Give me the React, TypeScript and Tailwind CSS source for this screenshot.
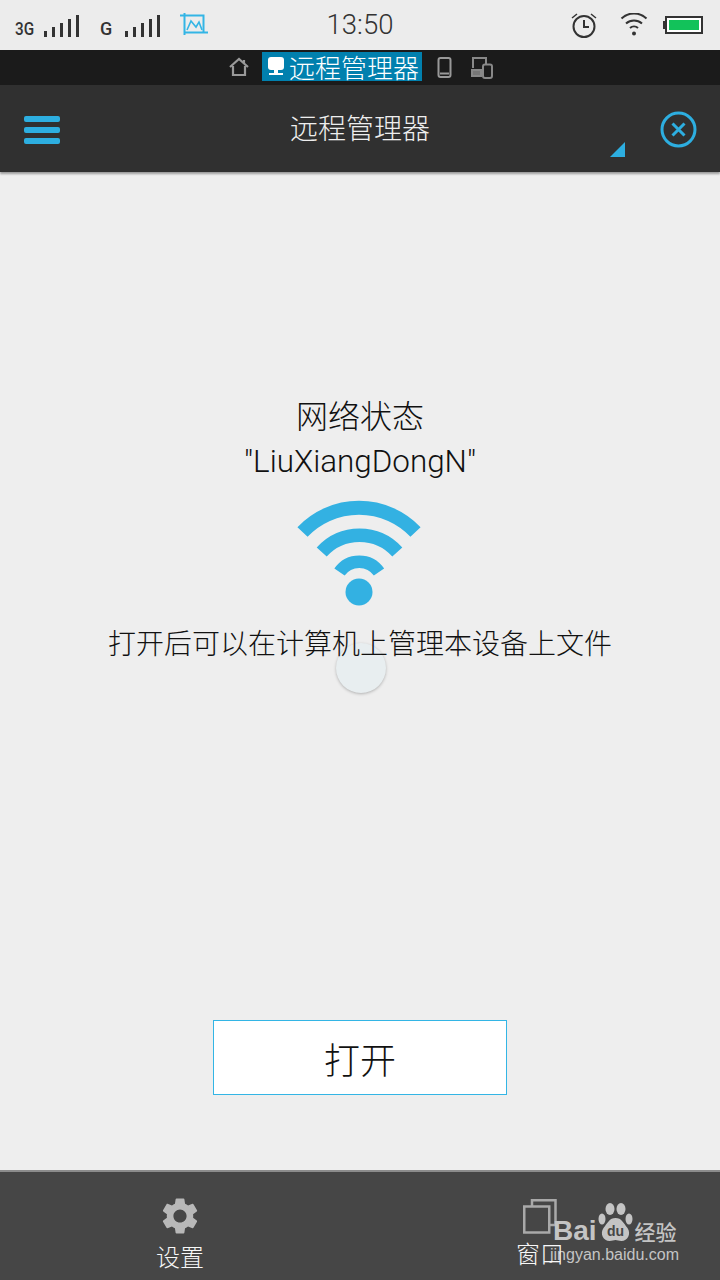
import { MdSettings } from "react-icons/md";

const cjk = "font-['Noto_Sans_CJK_SC','Noto_Sans',sans-serif]";
const roboto = "font-['Roboto','Noto_Sans_CJK_SC',sans-serif]";

function SignalBars() {
  return (
    <div className="flex items-end gap-[5px] mt-[1px]">
      {[6, 10, 14, 18, 22].map((h, i) => (
        <div key={i} className="w-[3px] bg-[#333]" style={{ height: h }} />
      ))}
    </div>
  );
}

function CropIcon() {
  return (
    <svg width="28" height="23" viewBox="0 0 28 23" fill="none" stroke="#33b5e5" strokeWidth="2">
      <path d="M0 2.500h23.500V20M4.500 0v22M4.500 19.500H28" />
      <path d="M7 17l4-9 5 6 3-5 3 8" strokeWidth="1.600" />
    </svg>
  );
}

function AlarmIcon() {
  return (
    <svg width="28" height="28" viewBox="0 0 28 28" fill="none" stroke="#333">
      <circle cx="14" cy="15.500" r="10.500" strokeWidth="2" />
      <path d="M14 9v7h5" strokeWidth="2" />
      <path d="M2 7l5-4M26 7l-5-4" strokeWidth="1.500" />
    </svg>
  );
}

function SmallWifi() {
  return (
    <svg width="28" height="24" viewBox="0 0 28 24" fill="none" stroke="#333" strokeWidth="2">
      <path d="M1.500 5.500a18 18 0 0 1 25 0" />
      <path d="M6 10.500a12 12 0 0 1 16 0" />
      <path d="M10 15a6 6 0 0 1 8 0" />
      <circle cx="14" cy="20.500" r="2" fill="#333" stroke="none" />
    </svg>
  );
}

function Battery() {
  return (
    <div className="flex items-center">
      <div className="w-[2px] h-[8px] bg-[#333]" />
      <div className="w-[38px] h-[18px] border-2 border-[#333] p-[2px] bg-white">
        <div className="w-full h-full bg-[#12c25a]" />
      </div>
    </div>
  );
}

function StatusBar() {
  return (
    <div className="h-[50px] bg-[#ececec] grid grid-cols-[1fr_auto_1fr] items-center shrink-0">
      <div className="flex items-center">
        <span className={`${roboto} ml-[15px] mt-[8px] text-[18px] leading-none text-[#333] w-[29px] font-medium scale-x-[0.85] origin-left`}>3G</span>
        <SignalBars />
        <span className={`${roboto} ml-[21px] mt-[8px] text-[18px] leading-none text-[#333] w-[25px] font-medium`}>G</span>
        <SignalBars />
        <div className="ml-[20px] mt-[-1px]">
          <CropIcon />
        </div>
      </div>
      <span className={`${roboto} text-[27.500px] leading-none font-light text-[#333]`}>13:50</span>
      <div className="flex items-center justify-end mr-[17px]">
        <AlarmIcon />
        <div className="ml-[22px]">
          <SmallWifi />
        </div>
        <div className="ml-[15px]">
          <Battery />
        </div>
      </div>
    </div>
  );
}

function TabStrip() {
  return (
    <div className="h-[35px] bg-[#1b1b1b] flex items-start justify-center pl-[2px] shrink-0">
      <svg className="mt-[7px]" width="20" height="20" viewBox="0 0 20 20" fill="none" stroke="#999" strokeWidth="2.200">
        <path d="M1 10l9-8 9 8M4 9v9h12V9M15 3v4" />
      </svg>
      <div className="ml-[13px] mt-[2px] w-[160px] h-[29px] bg-[#0180ae] flex items-center pl-[6px]">
        <svg width="16" height="21" viewBox="0 0 16 21" fill="#fff">
          <rect x="0" y="1" width="16" height="13" rx="3" />
          <rect x="6" y="14" width="4" height="3" />
          <rect x="1" y="17" width="14" height="2" />
        </svg>
        <span className={`${cjk} ml-[5px] text-[26px] leading-none font-light text-white whitespace-nowrap`}>远程管理器</span>
      </div>
      <svg className="ml-[15px] mt-[7px]" width="15" height="21" viewBox="0 0 15 21" fill="none" stroke="#999" strokeWidth="2">
        <rect x="1.500" y="1" width="12" height="19" rx="2" />
        <path d="M3 16.500h9" />
      </svg>
      <svg className="ml-[19px] mt-[6px]" width="22" height="23" viewBox="0 0 22 23" fill="none" stroke="#888" strokeWidth="2">
        <path d="M2 12V2h13v6" />
        <path d="M1 14h9v6H1z" fill="#777" />
        <rect x="12" y="8.500" width="9" height="13.500" rx="2" />
      </svg>
    </div>
  );
}

function Header() {
  return (
    <div className="h-[87px] bg-[#303030] flex items-center justify-between relative shrink-0 shadow-[0_2px_2px_rgba(0,0,0,0.35)] z-10">
      <div className="ml-[24px] flex flex-col gap-[5px] w-[36px] mt-[2px]">
        <div className="h-[6px] rounded-[2px] bg-[#2daee0]" />
        <div className="h-[6px] rounded-[2px] bg-[#2daee0]" />
        <div className="h-[6px] rounded-[2px] bg-[#2daee0]" />
      </div>
      <span className={`${cjk} mb-[3px] text-[28px] font-light text-[#eee]`}>远程管理器</span>
      <svg className="mr-[23px] mt-[1px]" width="37" height="37" viewBox="0 0 37 37" fill="none" stroke="#2daee0">
        <circle cx="18.500" cy="18.500" r="16.500" strokeWidth="3" />
        <path d="M12.500 12.500l12 12M24.500 12.500l-12 12" strokeWidth="3" />
      </svg>
      <svg className="absolute left-[610px] top-[57px]" width="15" height="15" viewBox="0 0 15 15" fill="#2daee0">
        <path d="M15 0v15H0z" />
      </svg>
    </div>
  );
}

function WifiLarge() {
  return (
    <svg width="124" height="106" viewBox="0 0 124 106" fill="none" stroke="#33b1e2" className="block">
      <path d="M5.500 32A78 78 0 0 1 118.500 32" strokeWidth="14" />
      <path d="M24.700 52A51 51 0 0 1 100.300 52" strokeWidth="13.500" />
      <path d="M42.500 72A24 24 0 0 1 82 72" strokeWidth="12.500" />
      <circle cx="62" cy="92" r="13.500" fill="#33b1e2" stroke="none" />
    </svg>
  );
}

function Content() {
  return (
    <div className="flex-1 bg-[#eeeeee] flex flex-col items-center relative">
      <div className="absolute left-[336px] top-[471px] w-[50px] h-[50px] rounded-full bg-[#e8eef0] shadow-[0_1px_3px_rgba(0,0,0,0.25)]" />
      <h1 className={`${cjk} mt-[218px] text-[32px] leading-[48px] font-light text-[#111] relative`}>网络状态</h1>
      <p className={`${roboto} mt-[3px] text-[31.400px] leading-[42px] font-light text-[#111] relative`}>"LiuXiangDongN"</p>
      <div className="mt-[17px] -ml-[2px] relative">
        <WifiLarge />
      </div>
      <p className={`${cjk} mt-[15px] text-[28px] leading-[42px] font-light text-[#111] relative`}>打开后可以在计算机上管理本设备上文件</p>
      <button
        type="button"
        className={`${cjk} mt-[357px] w-[294px] h-[75px] bg-white border border-[#33b5e5] text-[36px] font-light text-[#111]`}
      >
        打开
      </button>
    </div>
  );
}

function Watermark() {
  return (
    <div className="absolute left-[553px] top-[31px] w-[130px] text-[#c4c4c4]">
      <div className="flex items-end h-[40px]">
        <span className="font-['Liberation_Sans',sans-serif] font-bold text-[28px] leading-[24px]">Bai</span>
        <svg width="35" height="40" viewBox="0 0 35 40" fill="#c4c4c4" className="ml-[1px]">
          <ellipse cx="4" cy="16" rx="3.500" ry="5.500" />
          <ellipse cx="12" cy="6" rx="4.500" ry="6" />
          <ellipse cx="23" cy="6" rx="4.500" ry="6" />
          <ellipse cx="31" cy="16" rx="3.500" ry="5.500" />
          <path d="M17.500 15c6 0 8 5 12 10 4 6 0 13-6 13-3 0-4-1-6-1s-3 1-6 1c-6 0-10-7-6-13 4-5 6-10 12-10z" />
          <text x="17.500" y="33" textAnchor="middle" fontSize="14" fontWeight="700" fill="#464646" fontFamily="Liberation Sans">du</text>
        </svg>
        <span className={`${cjk} ml-[2px] text-[21px] leading-[24px] font-medium whitespace-nowrap`}>经验</span>
      </div>
      <div className="font-['Liberation_Sans',sans-serif] text-[16px] leading-[20px] mt-[2px] -ml-[3px] whitespace-nowrap">jingyan.baidu.com</div>
    </div>
  );
}

function BottomBar() {
  return (
    <div className="h-[110px] bg-[#464646] border-t-2 border-[#8c8c8c] flex relative shrink-0">
      <div className="w-[360px] flex flex-col items-center">
        <MdSettings size={44} color="#b8b8b8" className="mt-[22px]" />
        <span className={`${cjk} mt-[2px] text-[24px] leading-[32px] font-light text-[#f7f7f7]`}>设置</span>
      </div>
      <div className="w-[360px] flex flex-col items-center">
        <svg width="34" height="35" viewBox="0 0 34 35" fill="none" stroke="#a9a9a9" strokeWidth="2.500" className="mt-[27px]">
          <rect x="1.250" y="7.500" width="25" height="26" />
          <path d="M9 7V1.250h23.500V26h-6" />
        </svg>
        <span className={`${cjk} mt-[3px] text-[24px] leading-[32px] font-light text-[#f7f7f7] relative z-10`}>窗口</span>
      </div>
      <Watermark />
    </div>
  );
}

export default function App() {
  return (
    <div className="w-[720px] h-[1280px] flex flex-col overflow-hidden">
      <StatusBar />
      <TabStrip />
      <Header />
      <Content />
      <BottomBar />
    </div>
  );
}
